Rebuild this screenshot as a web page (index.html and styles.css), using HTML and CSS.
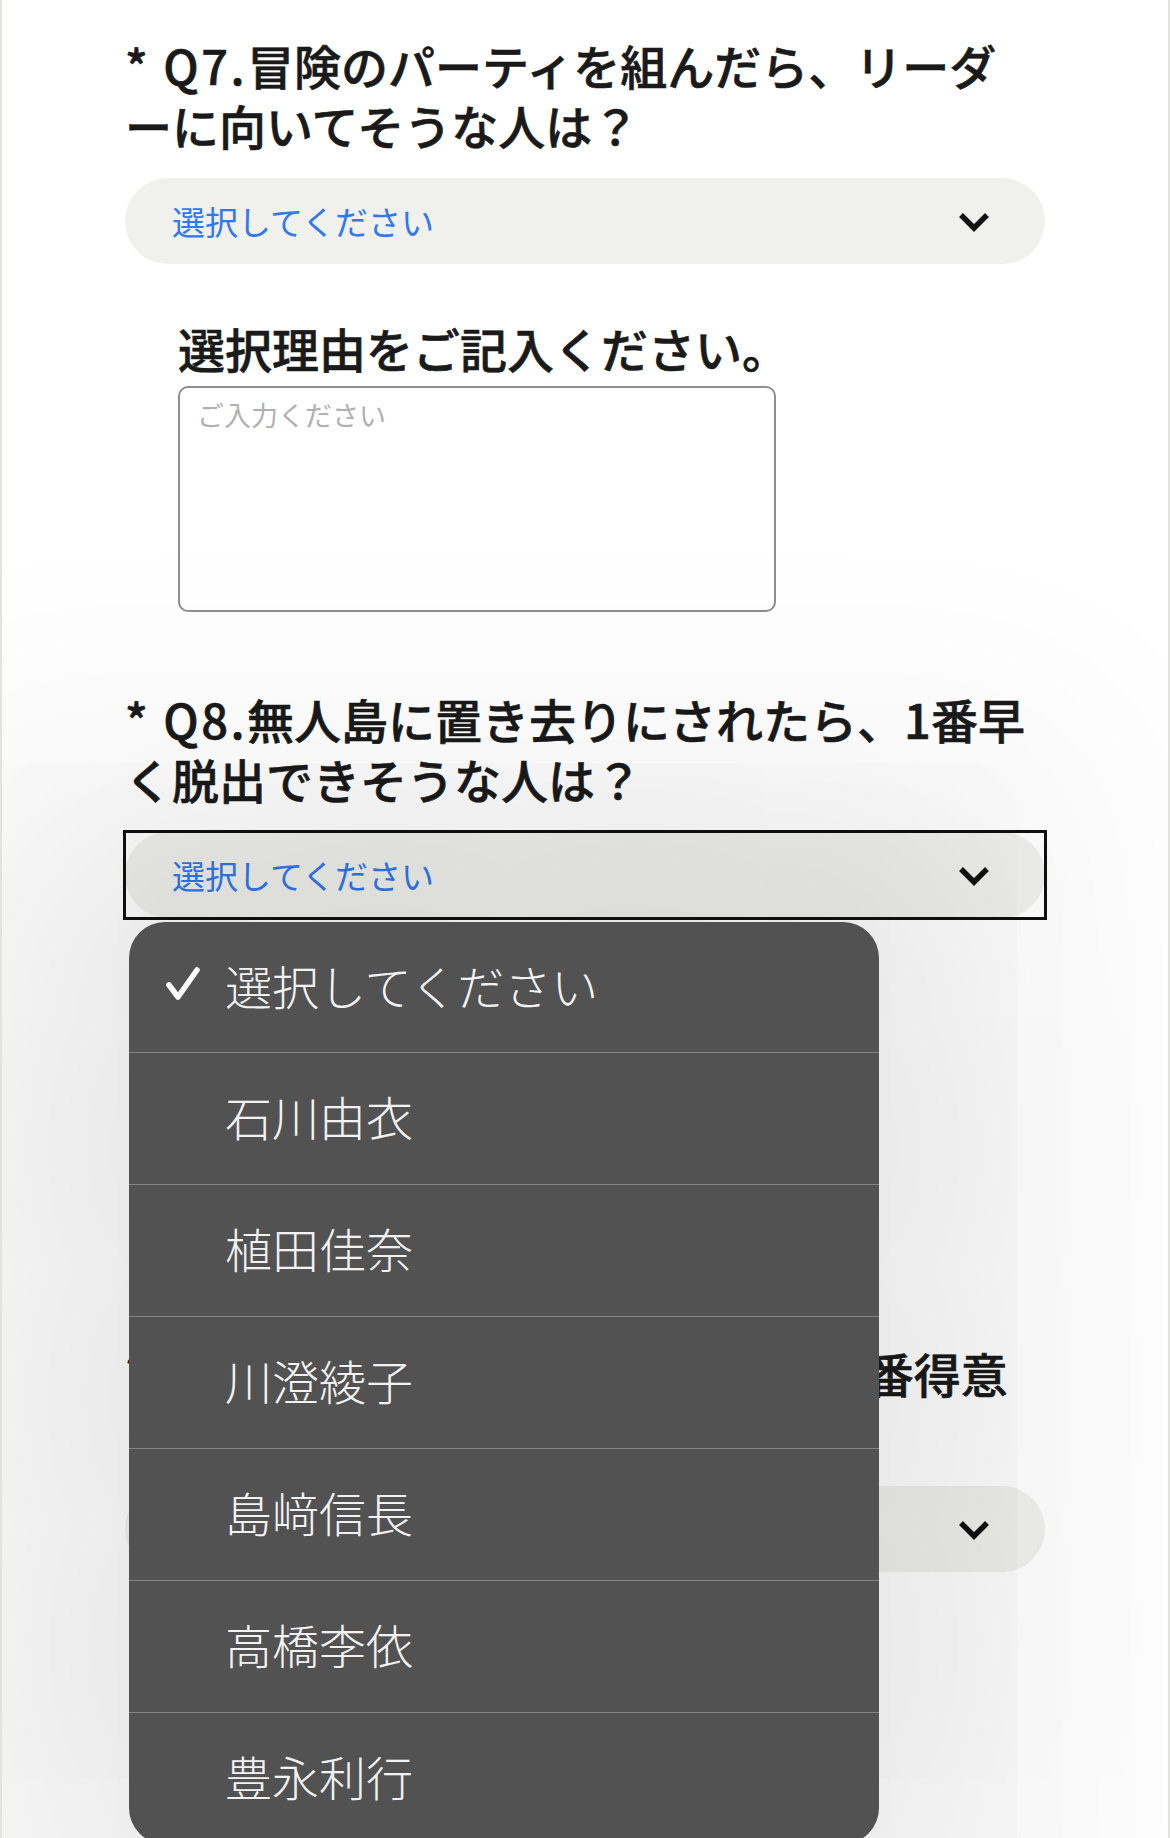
FILE: index.html
```html
<!DOCTYPE html>
<html lang="ja">
<head>
<meta charset="UTF-8">
<meta name="viewport" content="width=device-width, initial-scale=1">
<title>アンケート</title>
<link rel="stylesheet" href="styles.css">
</head>
<body>

<div class="page">
  <form class="form">

    <section class="question">
      <h3 class="q-title"><span class="q-num">* Q7.</span>冒険のパーティを組んだら、リーダ<br>ーに向いてそうな人は？</h3>
      <div class="select-wrap">
        <div class="select">
          <span class="select-value">選択してください</span>
          <svg class="chevron" viewBox="0 0 34 24" width="34" height="24"><polyline points="4,6 17,19 30,6"/></svg>
        </div>
      </div>
      <div class="reason">
        <label class="reason-label" for="reason7">選択理由をご記入ください。</label>
        <textarea class="reason-input" id="reason7" placeholder="ご入力ください"></textarea>
      </div>
    </section>

    <section class="question">
      <h3 class="q-title"><span class="q-num">* Q8.</span>無人島に置き去りにされたら、1番早<br>く脱出できそうな人は？</h3>
      <div class="select-wrap is-open">
        <div class="select">
          <span class="select-value">選択してください</span>
          <svg class="chevron" viewBox="0 0 34 24" width="34" height="24"><polyline points="4,6 17,19 30,6"/></svg>
        </div>

        <!-- 開いている選択肢 -->
        <ul class="options">
          <li class="option is-checked">
            <svg class="check" viewBox="0 0 36 36" width="36" height="36"><polyline points="4,19 13,31 32,4"/></svg>
            選択してください
          </li>
          <li class="option">石川由衣</li>
          <li class="option">植田佳奈</li>
          <li class="option">川澄綾子</li>
          <li class="option">島﨑信長</li>
          <li class="option">高橋李依</li>
          <li class="option">豊永利行</li>
        </ul>
      </div>
      <div class="reason">
        <label class="reason-label" for="reason8">選択理由をご記入ください。</label>
        <textarea class="reason-input" id="reason8" placeholder="ご入力ください"></textarea>
      </div>
    </section>

    <section class="question">
      <h3 class="q-title"><span class="q-num">* Q9.</span>メンバーの中で、歌うのが 一番得意<br>そうな人は？</h3>
      <div class="select-wrap">
        <div class="select">
          <span class="select-value">選択してください</span>
          <svg class="chevron" viewBox="0 0 34 24" width="34" height="24"><polyline points="4,6 17,19 30,6"/></svg>
        </div>
      </div>
    </section>

  </form>
</div>

</body>
</html>
```

FILE: styles.css
```css
html, body {
  margin: 0;
  padding: 0;
}

body {
  font-family: "Noto Sans CJK JP", "Noto Sans", sans-serif;
  color: #1a1a1a;
  background: #fff;
}

.page {
  height: 100vh;
  overflow: hidden;
  border-left: 2px solid #e2e2de;
  border-right: 2px solid #e2e2de;
  box-sizing: border-box;
}

.form {
  width: 920px;
  padding: 35px 0 0 123px;
}

.question + .question {
  margin-top: 77px;
}

.q-title {
  margin: 0;
  font-size: 47px;
  line-height: 60px;
  font-weight: 500;
  -webkit-text-stroke: 0.6px #1a1a1a;
}

.q-num {
  letter-spacing: 2.5px;
}

.select-wrap {
  position: relative;
  margin-top: 23px;
}

.select-wrap.is-open {
  outline: 3px solid #111;
  outline-offset: -1px;
}

.select {
  height: 86px;
  border-radius: 43px;
  background: #f0f0ec;
  display: flex;
  align-items: center;
  justify-content: space-between;
  padding: 0 54px 0 47px;
}

.select-value {
  font-size: 33px;
  color: #2f78ee;
}

.chevron {
  fill: none;
  stroke: #111;
  stroke-width: 5.5;
}

/* ドロップダウン */
.options {
  position: absolute;
  top: calc(100% + 4px);
  left: 4px;
  z-index: 10;
  width: 750px;
  margin: 0;
  padding: 0;
  list-style: none;
  background: #525252;
  border-radius: 36px;
  box-shadow: 0 0 300px 60px rgba(0, 0, 0, 0.1), 0 0 200px 250px rgba(0, 0, 0, 0.03);
  overflow: hidden;
}

.option {
  height: 132px;
  box-sizing: border-box;
  border-top: 1px solid #878787;
  display: flex;
  align-items: center;
  padding: 0 0 6px 96px;
  font-size: 47px;
  font-weight: 300;
  color: #f2f2f2;
  position: relative;
}

.option:first-child {
  height: 130px;
  border-top: none;
}

.check {
  position: absolute;
  left: 36px;
  top: 44px;
  fill: none;
  stroke: #fff;
  stroke-width: 5.5;
  stroke-linecap: round;
  stroke-linejoin: round;
}

.reason {
  margin-top: 54px;
  padding-left: 53px;
}

.reason-label {
  display: block;
  font-size: 47px;
  line-height: 60px;
  font-weight: 500;
  -webkit-text-stroke: 0.6px #1a1a1a;
}

.reason-input {
  display: block;
  margin-top: 8px;
  width: 598px;
  height: 226px;
  box-sizing: border-box;
  border: 2px solid #8e8e8e;
  border-radius: 10px;
  padding: 8px 17px;
  font-family: inherit;
  font-size: 27px;
  line-height: 38px;
  resize: none;
  background: #fff;
}

.reason-input::placeholder {
  color: #b0b0b0;
}
```
